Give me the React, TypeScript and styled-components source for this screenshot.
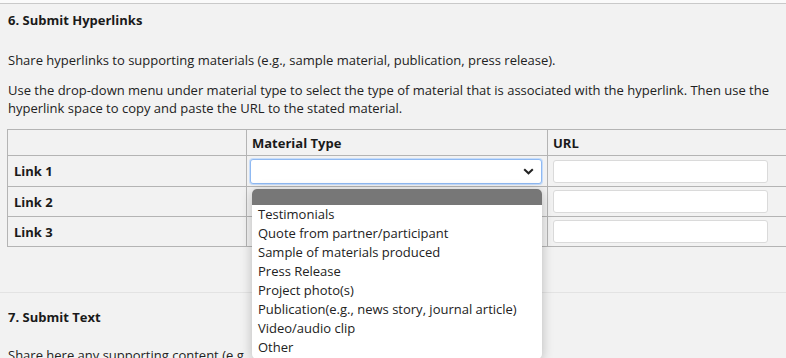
import styled, { createGlobalStyle } from "styled-components";

const GlobalStyle = createGlobalStyle`
  html, body {
    margin: 0;
    padding: 0;
    background: #f2f2f2;
    overflow: hidden;
  }
  body {
    font-family: "Open Sans", "Liberation Sans", Arial, sans-serif;
    font-size: 13px;
    color: #222;
  }
`;

const materialTypes = [
  "Testimonials",
  "Quote from partner/participant",
  "Sample of materials produced",
  "Press Release",
  "Project photo(s)",
  "Publication(e.g., news story, journal article)",
  "Video/audio clip",
  "Other",
];

const links = ["Link 1", "Link 2", "Link 3"];

export default function App() {
  return (
    <>
      <GlobalStyle />
      <Page>
        <Section>
          <Title>6. Submit Hyperlinks</Title>
          <Text>
            Share hyperlinks to supporting materials (e.g., sample material,
            publication, press release).
          </Text>
          <Text $gap={12}>
            Use the drop-down menu under material type to select the type of
            material that is associated with the hyperlink. Then use the
            hyperlink space to copy and paste the URL to the stated material.
          </Text>
          <Table>
            <colgroup>
              <Col $w={239} />
              <Col $w={301} />
              <Col />
            </colgroup>
            <thead>
              <tr>
                <HeadCell />
                <HeadCell>Material Type</HeadCell>
                <HeadCell>URL</HeadCell>
              </tr>
            </thead>
            <tbody>
              {links.map((label, i) => (
                <Row key={label} $first={i === 0}>
                  <LabelCell>{label}</LabelCell>
                  <SelectCell>
                    {i === 0 ? (
                      <SelectWrap>
                        <SelectBox>
                          <svg width="11" height="7" viewBox="0 0 11 7">
                            <path
                              d="M1.2 1.2 L5.5 5.3 L9.8 1.2"
                              fill="none"
                              stroke="#222"
                              strokeWidth="2"
                            />
                          </svg>
                        </SelectBox>
                        <Menu>
                          <MenuHead />
                          {materialTypes.map((m) => (
                            <Option key={m}>{m}</Option>
                          ))}
                        </Menu>
                      </SelectWrap>
                    ) : null}
                  </SelectCell>
                  <UrlCell>
                    <UrlInput />
                  </UrlCell>
                </Row>
              ))}
            </tbody>
          </Table>
        </Section>
        <Section $divided>
          <Title $gap={15}>7. Submit Text</Title>
          <Text $gap={20}>
            Share here any supporting content (e.g., testimonial, quote from
            partner, etc.)
          </Text>
        </Section>
      </Page>
    </>
  );
}

const Page = styled.div`
  border-top: 3px solid #fafafa;
  min-height: 355px;
`;

const Section = styled.section<{ $divided?: boolean }>`
  padding: 0 0 0 8px;
  border-top: 1px solid ${(p) => (p.$divided ? "#e3e3e3" : "#c9c9c9")};
  padding-bottom: ${(p) => (p.$divided ? "0" : "45px")};
`;

const Title = styled.h3<{ $gap?: number }>`
  margin: ${(p) => p.$gap ?? 7}px 0 0;
  font-size: 13px;
  line-height: 18px;
  font-weight: 700;
  color: #1a1a1a;
`;

const Text = styled.p<{ $gap?: number }>`
  margin: ${(p) => p.$gap ?? 22}px 0 0;
  line-height: 18px;
  color: #222;
  padding-right: 12px;
`;

const Table = styled.table`
  margin: 12px 0 0 -1px;
  width: 790px;
  border-collapse: collapse;
  table-layout: fixed;
`;

const Col = styled.col<{ $w?: number }>`
  width: ${(p) => (p.$w ? `${p.$w}px` : "auto")};
`;

const HeadCell = styled.th`
  height: 25px;
  padding: 0 5px;
  border: 1px solid #b4b4b4;
  text-align: left;
  font-weight: 700;
  color: #1a1a1a;
`;

const Row = styled.tr<{ $first?: boolean }>`
  height: ${(p) => (p.$first ? 31 : 30)}px;
`;

const LabelCell = styled.td`
  padding: 0 6px;
  border: 1px solid #b4b4b4;
  font-weight: 700;
  color: #1a1a1a;
`;

const SelectCell = styled.td`
  padding: 2px 5px 2px 3px;
  border: 1px solid #b4b4b4;
`;

const UrlCell = styled.td`
  padding: 2px 21px 2px 5px;
  border: 1px solid #b4b4b4;
`;

const SelectWrap = styled.div`
  position: relative;
`;

const SelectBox = styled.div`
  box-sizing: border-box;
  height: 25px;
  background: #fff;
  border: 1px solid #8fb9f2;
  box-shadow: 0 0 0 1px #c7ddfa;
  border-radius: 3px;
  display: flex;
  align-items: center;
  justify-content: flex-end;
  padding-right: 7px;
`;

const Menu = styled.div`
  position: absolute;
  top: 30px;
  left: 2px;
  right: 0;
  z-index: 2;
  background: #fff;
  border-radius: 5px;
  box-shadow: 0 2px 12px rgba(0, 0, 0, 0.24);
  overflow: hidden;
  padding-bottom: 2px;
`;

const MenuHead = styled.div`
  height: 16px;
  background: #777;
`;

const Option = styled.div`
  padding: 0 6px;
  line-height: 19px;
  color: #222;
  white-space: nowrap;
`;

const UrlInput = styled.input`
  box-sizing: border-box;
  display: block;
  width: 215px;
  height: 23px;
  background: #fff;
  border: 1px solid #dadada;
  border-radius: 3px;
`;
